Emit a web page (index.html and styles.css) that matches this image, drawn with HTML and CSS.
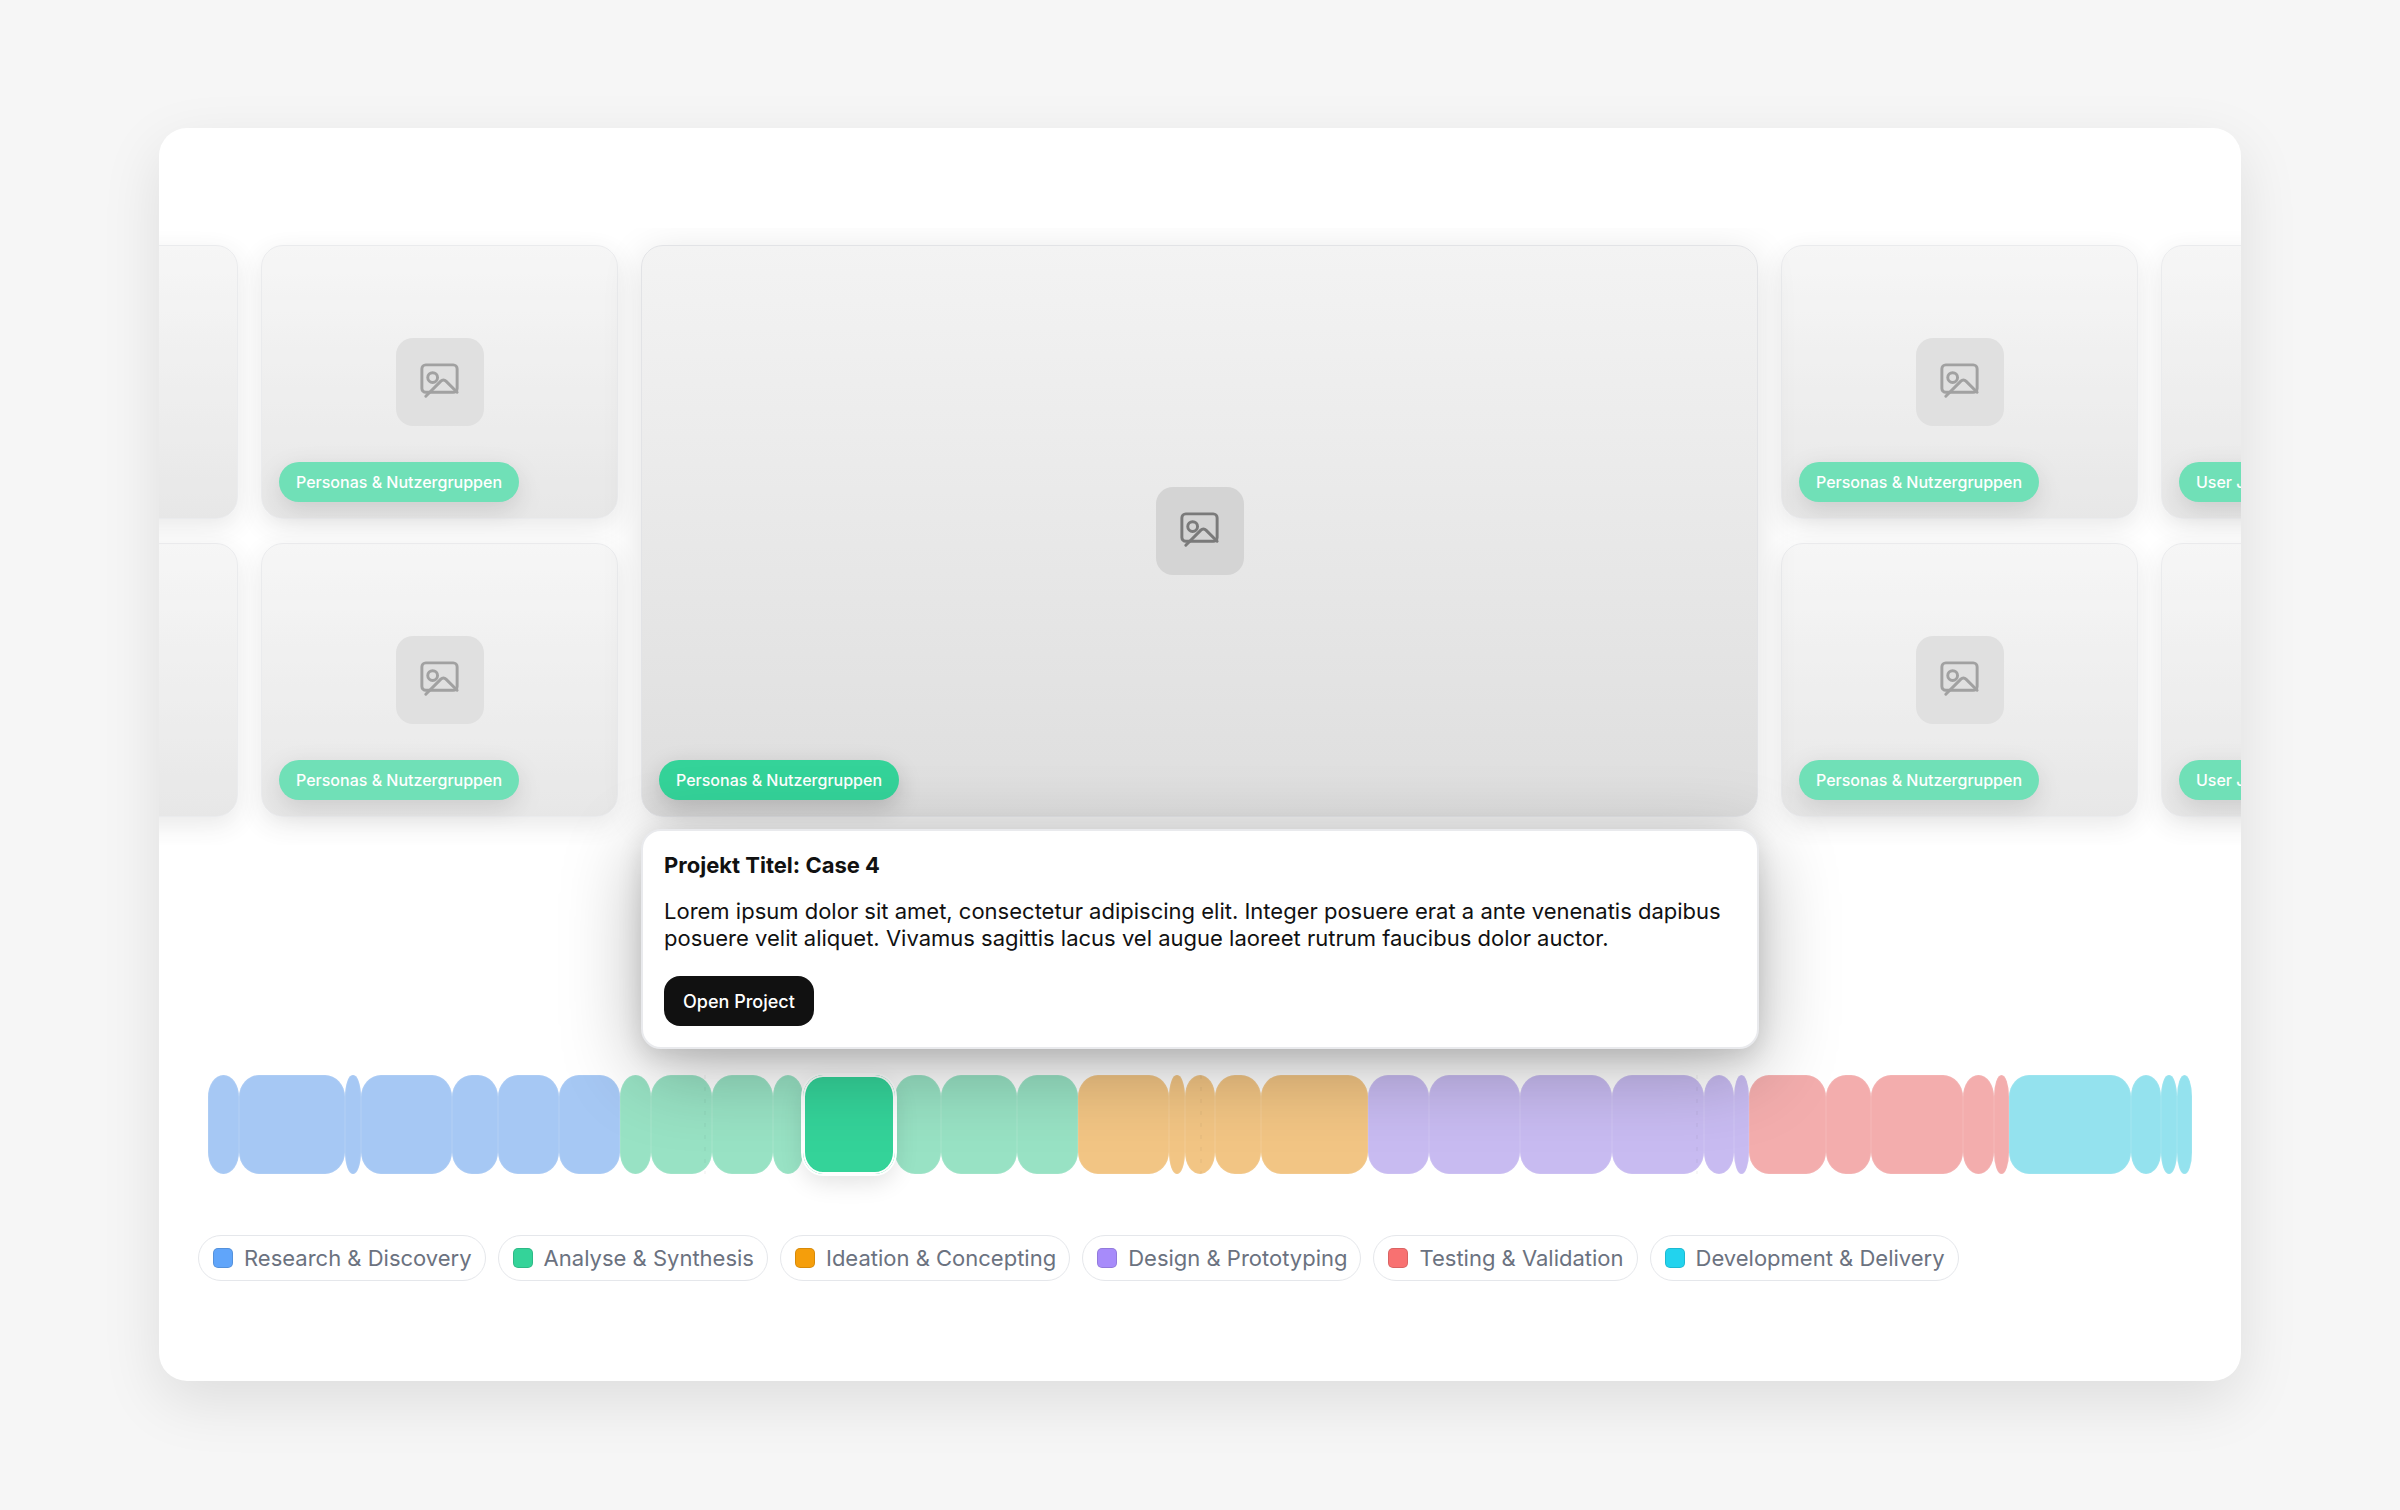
FILE: index.html
```html
<!DOCTYPE html>
<html lang="de">
<head>
    <meta charset="UTF-8">
    <meta name="viewport" content="width=device-width, initial-scale=1.0">
    <title>Projekte</title>
    <link rel="stylesheet" href="styles.css">
</head>
<body>
    <!-- Icon für alle Platzhalter -->
    <svg class="sprite" aria-hidden="true">
        <symbol id="icon-image" viewBox="0 0 24 24">
            <rect x="3" y="3" width="18" height="14" rx="2"/>
            <circle cx="8.5" cy="9.5" r="2.5"/>
            <path d="M21 17l-5.7-5.7a1.8 1.8 0 0 0-2.6 0L5 19"/>
        </symbol>
    </svg>

    <main class="panel">
        <!-- Karussell -->
        <section class="carousel">
            <div class="track">
                <div class="card"></div>
                <div class="card">
                    <div class="placeholder"><svg class="icon"><use href="#icon-image"/></svg></div>
                    <span class="badge">Personas &amp; Nutzergruppen</span>
                </div>
                <div class="card card-active">
                    <div class="placeholder"><svg class="icon"><use href="#icon-image"/></svg></div>
                    <span class="badge">Personas &amp; Nutzergruppen</span>
                </div>
                <div class="card">
                    <div class="placeholder"><svg class="icon"><use href="#icon-image"/></svg></div>
                    <span class="badge">Personas &amp; Nutzergruppen</span>
                </div>
                <div class="card">
                    <span class="badge">User Journeys</span>
                </div>
                <div class="card"></div>
                <div class="card">
                    <div class="placeholder"><svg class="icon"><use href="#icon-image"/></svg></div>
                    <span class="badge">Personas &amp; Nutzergruppen</span>
                </div>
                <div class="card">
                    <div class="placeholder"><svg class="icon"><use href="#icon-image"/></svg></div>
                    <span class="badge">Personas &amp; Nutzergruppen</span>
                </div>
                <div class="card">
                    <span class="badge">User Journeys</span>
                </div>
            </div>
        </section>

        <!-- Projektinfo -->
        <article class="project">
            <h2>Projekt Titel: Case 4</h2>
            <p>Lorem ipsum dolor sit amet, consectetur adipiscing elit. Integer posuere erat a ante venenatis dapibus posuere velit aliquet. Vivamus sagittis lacus vel augue laoreet rutrum faucibus dolor auctor.</p>
            <button type="button" class="open-btn">Open Project</button>
        </article>

        <!-- Timeline, flex-grow = Dauer -->
        <section class="timeline">
            <div class="segment research" style="flex-grow: 2"></div>
            <div class="segment research" style="flex-grow: 7"></div>
            <div class="segment research" style="flex-grow: 1"></div>
            <div class="segment research" style="flex-grow: 6"></div>
            <div class="segment research" style="flex-grow: 3"></div>
            <div class="segment research" style="flex-grow: 4"></div>
            <div class="segment research" style="flex-grow: 4"></div>

            <div class="segment analyse" style="flex-grow: 2"></div>
            <div class="segment analyse" style="flex-grow: 4"></div>
            <div class="segment analyse" style="flex-grow: 4"></div>
            <div class="segment analyse" style="flex-grow: 2"></div>
            <div class="segment analyse segment-active" style="flex-grow: 6"></div>
            <div class="segment analyse" style="flex-grow: 3"></div>
            <div class="segment analyse" style="flex-grow: 5"></div>
            <div class="segment analyse" style="flex-grow: 4"></div>

            <div class="segment ideation" style="flex-grow: 6"></div>
            <div class="segment ideation" style="flex-grow: 1"></div>
            <div class="segment ideation" style="flex-grow: 2"></div>
            <div class="segment ideation" style="flex-grow: 3"></div>
            <div class="segment ideation" style="flex-grow: 7"></div>

            <div class="segment design" style="flex-grow: 4"></div>
            <div class="segment design" style="flex-grow: 6"></div>
            <div class="segment design" style="flex-grow: 6"></div>
            <div class="segment design" style="flex-grow: 6"></div>
            <div class="segment design" style="flex-grow: 2"></div>
            <div class="segment design" style="flex-grow: 1"></div>

            <div class="segment testing" style="flex-grow: 5"></div>
            <div class="segment testing" style="flex-grow: 3"></div>
            <div class="segment testing" style="flex-grow: 6"></div>
            <div class="segment testing" style="flex-grow: 2"></div>
            <div class="segment testing" style="flex-grow: 1"></div>

            <div class="segment development" style="flex-grow: 8"></div>
            <div class="segment development" style="flex-grow: 2"></div>
            <div class="segment development" style="flex-grow: 1"></div>
            <div class="segment development" style="flex-grow: 1"></div>

            <div class="quarters"><i></i><i></i><i></i><i></i></div>
        </section>

        <!-- Legende -->
        <ul class="legend">
            <li><span class="swatch swatch-research"></span>Research &amp; Discovery</li>
            <li><span class="swatch swatch-analyse"></span>Analyse &amp; Synthesis</li>
            <li><span class="swatch swatch-ideation"></span>Ideation &amp; Concepting</li>
            <li><span class="swatch swatch-design"></span>Design &amp; Prototyping</li>
            <li><span class="swatch swatch-testing"></span>Testing &amp; Validation</li>
            <li><span class="swatch swatch-development"></span>Development &amp; Delivery</li>
        </ul>
    </main>
</body>
</html>
```
FILE: styles.css
```css
* {
    box-sizing: border-box;
}

body {
    margin: 0;
    padding: 128px 159px;
    background-color: #f6f6f6;
    font-family: Inter, "Liberation Sans", sans-serif;
    color: #111;
}

.sprite {
    position: absolute;
    width: 0;
    height: 0;
}

.panel {
    padding: 100px 0;
    background-color: #fff;
    border-radius: 28px;
    box-shadow: 0 20px 60px rgba(0, 0, 0, 0.1);
}

/* Karussell */
.carousel {
    overflow: hidden;
    padding: 17px 0 28px;
}

.track {
    display: grid;
    grid-template-columns: 357px 357px 1fr 357px 357px;
    grid-auto-rows: 274px;
    gap: 24px 23px;
    margin: 0 -277px 0 -278px;
}

.card {
    position: relative;
    display: flex;
    align-items: center;
    justify-content: center;
    border: 1px solid #e2e3e6;
    border-radius: 22px;
    background: linear-gradient(#f3f3f3, #dedede);
    box-shadow: 0 8px 24px rgba(0, 0, 0, 0.12);
    opacity: 0.7;
}

.card-active {
    grid-row: span 2;
    z-index: 1;
    opacity: 1;
    box-shadow: 0 8px 40px rgba(0, 0, 0, 0.12);
}

.placeholder {
    display: flex;
    align-items: center;
    justify-content: center;
    width: 88px;
    height: 88px;
    border-radius: 17px;
    background-color: #d4d4d4;
}

.icon {
    width: 47px;
    height: 47px;
    fill: none;
    stroke: #7a7a7a;
    stroke-width: 1.5;
    stroke-linecap: round;
    stroke-linejoin: round;
}

.badge {
    position: absolute;
    left: 17px;
    bottom: 16px;
    padding: 0 17px;
    border-radius: 20px;
    background-color: #34d399;
    box-shadow: 0 8px 24px rgba(0, 0, 0, 0.18);
    color: #fff;
    font-size: 16px;
    font-weight: 500;
    line-height: 40px;
    white-space: nowrap;
}

/* Projektinfo */
.project {
    position: relative;
    z-index: 2;
    margin: -16px 482px 0;
    padding: 21px;
    border: 2px solid #e9eaed;
    border-radius: 20px;
    background-color: #fff;
    box-shadow: 0 20px 80px rgba(0, 0, 0, 0.28), 0 8px 24px rgba(0, 0, 0, 0.12);
}

.project h2 {
    margin: 0 0 20px;
    font-size: 22px;
    line-height: 26px;
}

.project p {
    margin: 0 0 24px;
    font-size: 22px;
    line-height: 27px;
}

.open-btn {
    display: block;
    padding: 0 19px;
    height: 50px;
    border: 0;
    border-radius: 16px;
    background-color: #111;
    color: #fff;
    font-family: inherit;
    font-size: 18px;
    font-weight: 500;
    cursor: pointer;
}

/* Timeline */
.timeline {
    position: relative;
    display: flex;
    height: 99px;
    margin: 26px 49px 0;
}

.segment {
    flex: 1 1 0;
    border-radius: min(20px, 50%) / 22px;
    box-shadow: inset 0 0 0 1px rgba(255, 255, 255, 0.08);
}

.research { background-color: #a6c8f4; }
.analyse { background-color: #98e2c4; }
.ideation { background-color: #f2c584; }
.design { background-color: #c8bbf1; }
.testing { background-color: #f3adad; }
.development { background-color: #94e2ee; }

.segment-active {
    z-index: 1;
    background-color: #34d399;
    box-shadow: inset 0 0 0 2px #fff, 0 0 0 2px #fff, 0 8px 24px rgba(0, 0, 0, 0.12);
}

.quarters {
    position: absolute;
    inset: 0;
    display: flex;
}

.quarters i {
    flex: 1;
}

.quarters i + i {
    background: repeating-linear-gradient(rgba(0, 0, 0, 0.03) 0 4px, transparent 4px 12px) left / 2px 100% no-repeat;
}

/* Legende */
.legend {
    display: flex;
    flex-wrap: wrap;
    gap: 12px;
    margin: 61px 39px 0;
    padding: 0;
    list-style: none;
}

.legend li {
    display: flex;
    align-items: center;
    gap: 11px;
    padding: 0 13px 0 14px;
    border: 1px solid #e5e7eb;
    border-radius: 23px;
    color: #6b7280;
    font-size: 22px;
    line-height: 44px;
}

.swatch {
    width: 20px;
    height: 20px;
    border: 1px solid rgba(0, 0, 0, 0.12);
    border-radius: 5px;
}

.swatch-research { background-color: #60a5fa; }
.swatch-analyse { background-color: #34d399; }
.swatch-ideation { background-color: #f59e0b; }
.swatch-design { background-color: #a78bfa; }
.swatch-testing { background-color: #f87171; }
.swatch-development { background-color: #22d3ee; }
```
